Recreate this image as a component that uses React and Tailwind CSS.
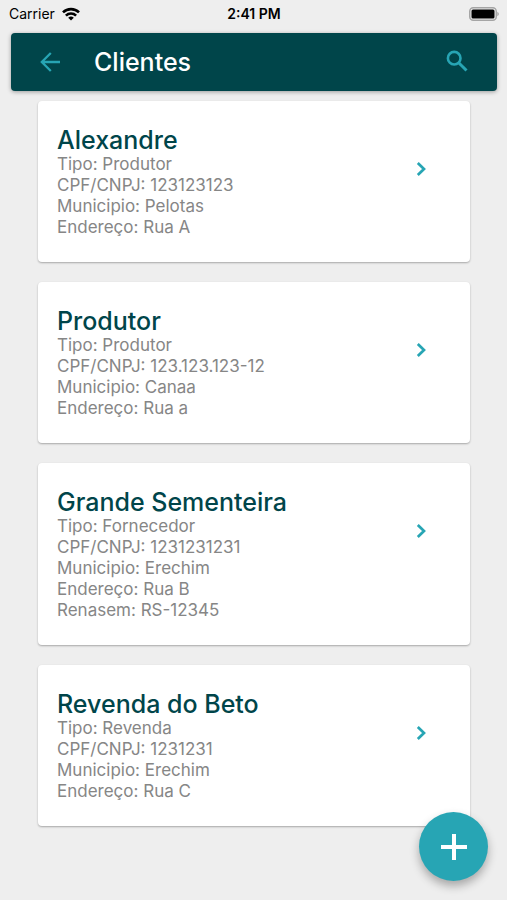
import React from 'react';

const clients = [
  { name: 'Alexandre', lines: ['Tipo: Produtor', 'CPF/CNPJ: 123123123', 'Municipio: Pelotas', 'Endereço: Rua A'] },
  { name: 'Produtor', lines: ['Tipo: Produtor', 'CPF/CNPJ: 123.123.123-12', 'Municipio: Canaa', 'Endereço: Rua a'] },
  {
    name: 'Grande Sementeira',
    lines: ['Tipo: Fornecedor', 'CPF/CNPJ: 1231231231', 'Municipio: Erechim', 'Endereço: Rua B', 'Renasem: RS-12345'],
  },
  { name: 'Revenda do Beto', lines: ['Tipo: Revenda', 'CPF/CNPJ: 1231231', 'Municipio: Erechim', 'Endereço: Rua C'] },
];

function StatusBar() {
  return (
    <div className="grid h-7 grid-cols-3 items-center pr-2 pl-[9px] text-sm text-black">
      <div className="flex items-center gap-[7px]">
        <span>Carrier</span>
        <svg viewBox="0 0 18 14" className="h-[14px] w-[18px]" fill="none" stroke="#000" strokeWidth="2.6" aria-hidden="true">
          <path d="M1 5.4a11.4 11.4 0 0 1 16 0" />
          <path d="M3.9 8.6a7.3 7.3 0 0 1 10.2 0" />
          <path d="M9 13.6 6.2 10.8a4 4 0 0 1 5.6 0Z" fill="#000" stroke="none" />
        </svg>
      </div>
      <span className="text-center font-semibold">2:41 PM</span>
      <svg viewBox="0 0 30 14" className="h-[14px] w-[30px] justify-self-end" aria-hidden="true">
        <rect x="0.75" y="0.75" width="26.5" height="12.5" rx="3.5" fill="none" stroke="#a5a5a5" strokeWidth="1.5" />
        <rect x="2.5" y="2.5" width="23" height="9" rx="1.5" fill="#000" />
        <path d="M28.3 4.8c2 .8 2 3.6 0 4.4Z" fill="#a5a5a5" />
      </svg>
    </div>
  );
}

function ClientCard({ name, lines }) {
  return (
    <li className="flex items-start justify-between rounded-[4px] bg-white pt-[25px] pr-[35px] pb-6 pl-[19px] shadow-[0_1px_2px_rgba(0,0,0,0.3)]">
      <div>
        <h2 className="text-[25px]/[28px] font-medium text-[#00454a]">{name}</h2>
        {lines.map((line) => (
          <p key={line} className="text-[17px]/[21px] text-[#868686]">{line}</p>
        ))}
      </div>
      <button type="button" aria-label={`Abrir ${name}`} className="mt-[29px] text-[#27a5b4]">
        <svg viewBox="0 0 28 28" className="size-7" fill="none" stroke="currentColor" strokeWidth="2.7" aria-hidden="true">
          <path d="m10.8 8 6.2 6-6.200 6" />
        </svg>
      </button>
    </li>
  );
}

export default function App() {
  return (
    <div className="min-h-screen bg-[#eeeeee] font-['Inter',sans-serif]">
      <StatusBar />
      <header className="mt-[5px] mr-[10px] ml-[11px] flex h-[58px] items-center rounded-[4px] bg-[#00454a] pr-[26px] pl-[25px] shadow-[0_1px_4px_rgba(0,0,0,0.35)]">
        <button type="button" aria-label="Voltar" className="text-[#27a5b4]">
          <svg viewBox="0 0 28 28" className="size-7" fill="none" stroke="currentColor" strokeWidth="2.3" aria-hidden="true">
            <path d="M24 14H5.8M14.8 5 5.8 14l9 9" />
          </svg>
        </button>
        <h1 className="ml-[30px] flex-1 text-[25px]/[28px] font-medium text-white">Clientes</h1>
        <button type="button" aria-label="Buscar" className="text-[#27a5b4]">
          <svg viewBox="0 0 28 28" className="size-7" fill="none" stroke="currentColor" strokeWidth="2.6" aria-hidden="true">
            <circle cx="11.2" cy="10.200" r="6.300" />
            <path d="m15.700 14.700 7.800 7.800" strokeWidth="3" />
          </svg>
        </button>
      </header>
      <ul className="mt-[10px] mr-[37px] ml-[38px] flex flex-col gap-5">
        {clients.map((client) => (
          <ClientCard key={client.name} {...client} />
        ))}
      </ul>
      <button
        type="button"
        aria-label="Adicionar cliente"
        className="fixed right-[19px] bottom-[19px] flex size-[69px] items-center justify-center rounded-full bg-[#27a5b4] text-white shadow-[0_5px_10px_rgba(0,0,0,0.3)]"
      >
        <svg viewBox="0 0 26 26" className="size-[26px]" stroke="currentColor" strokeWidth="4" aria-hidden="true">
          <path d="M13 0v26M0 13h26" />
        </svg>
      </button>
    </div>
  );
}
